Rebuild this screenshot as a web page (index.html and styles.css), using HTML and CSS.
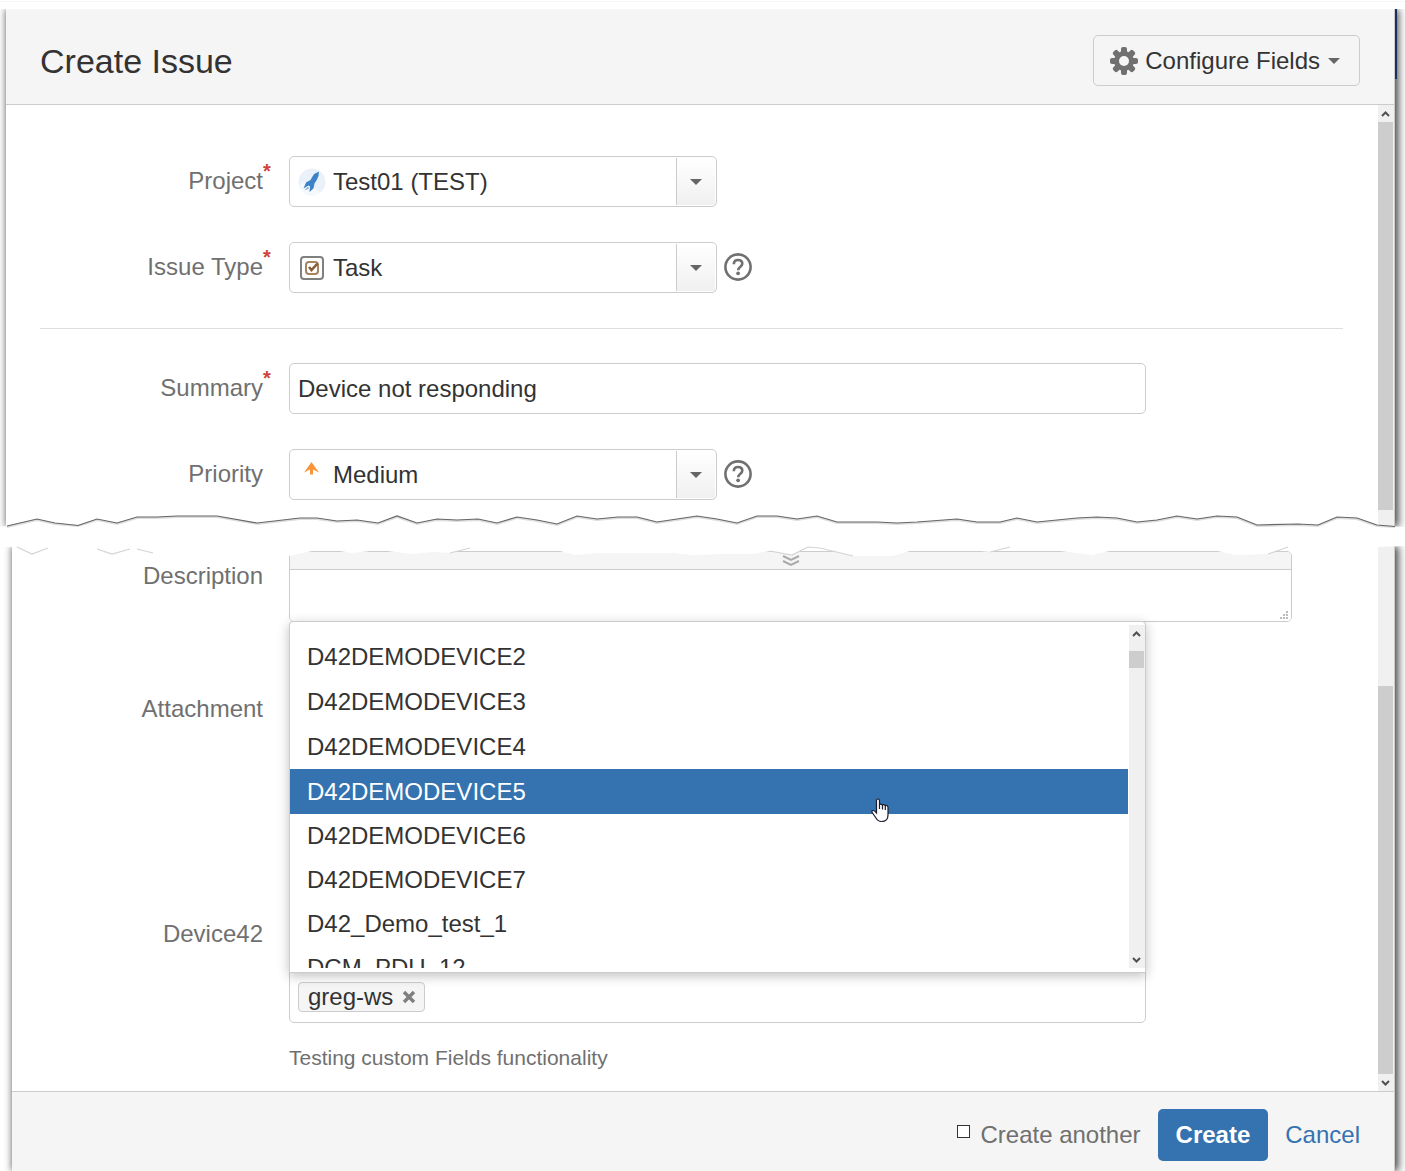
FILE: index.html
```html
<!DOCTYPE html>
<html lang="en">
<head>
<meta charset="utf-8">
<meta name="viewport" content="width=device-width, initial-scale=1">
<title>Create Issue</title>
<link rel="stylesheet" href="styles.css">
</head>
<body>
<form class="page">
  <section class="panel panel-top">
    <header class="dialog-header">
      <h1>Create Issue</h1>
      <button type="button" class="configure">
        <svg class="gear" viewBox="-14 -14 28 28" aria-hidden="true">
          <g fill="#707070">
            <rect x="-3" y="-14" width="6" height="28" rx="2"/>
            <rect x="-3" y="-14" width="6" height="28" rx="2" transform="rotate(45)"/>
            <rect x="-3" y="-14" width="6" height="28" rx="2" transform="rotate(90)"/>
            <rect x="-3" y="-14" width="6" height="28" rx="2" transform="rotate(135)"/>
            <circle r="10"/>
          </g>
          <circle r="5" fill="#f5f5f5"/>
        </svg>
        <span>Configure Fields</span>
        <svg class="caret" viewBox="0 0 12 6" aria-hidden="true"><path d="M0 0h12L6 6z"/></svg>
      </button>
    </header>
    <div class="scroll-area">
      <div class="fields fields-top">
        <div class="row">
          <label for="project">Project<span class="required">*</span></label>
          <div class="control">
            <div class="combo">
              <svg class="combo-icon" viewBox="0 0 28 28" aria-hidden="true">
                <circle cx="14" cy="14" r="13.500" fill="#eaf1f8"/>
                <path d="M1 18Q5 12 10 15T20 23Q24 25 22 25Q14 30 5 24Z" fill="#f6f9fc"/>
                <path d="M21 3.500Q16.500 5 14.500 8.500L12.500 12L8 14.500L5.500 20.500L10.500 17.500L12 18.500L11.500 24L15.500 20.500L16.500 15.500L19 11.500Q21 8 21 3.500Z" fill="#3b82c8"/>
                <path d="M10 18.500L6.500 22.500L11 20.500Z" fill="#7fb0e0"/>
              </svg>
              <select id="project"><option>Test01 (TEST)</option></select>
              <span class="combo-arrow"><svg class="caret" viewBox="0 0 12 6" aria-hidden="true"><path d="M0 0h12L6 6z"/></svg></span>
            </div>
          </div>
        </div>
        <div class="row">
          <label for="type">Issue Type<span class="required">*</span></label>
          <div class="control">
            <div class="combo">
              <svg class="combo-icon" viewBox="0 0 28 28" fill="none" aria-hidden="true">
                <rect x="3" y="3" width="22" height="22" rx="3" stroke="#808080" stroke-width="2"/>
                <rect x="8" y="8" width="12" height="12" rx="3" stroke="#a88462" stroke-width="2"/>
                <path d="M11 13L13.500 16L19.500 9.500" stroke="#8a5a33" stroke-width="2.500"/>
              </svg>
              <select id="type"><option>Task</option></select>
              <span class="combo-arrow"><svg class="caret" viewBox="0 0 12 6" aria-hidden="true"><path d="M0 0h12L6 6z"/></svg></span>
            </div>
            <button type="button" class="help" aria-label="Help">
              <svg viewBox="0 0 28 28" aria-hidden="true"><circle cx="14" cy="14" r="12.600"/><path d="M9.800 11.200C9.800 8.300 11.500 7 14 7C16.500 7 18.300 8.500 18.300 10.800C18.300 13.800 14.200 13.600 14.200 17.200"/><circle class="dot" cx="14.100" cy="20.300" r="1.900"/></svg>
            </button>
          </div>
        </div>
        <hr>
        <div class="row">
          <label for="summary">Summary<span class="required">*</span></label>
          <div class="control"><input id="summary" class="text" type="text" value="Device not responding"></div>
        </div>
        <div class="row">
          <label for="priority">Priority</label>
          <div class="control">
            <div class="combo">
              <svg class="combo-icon" viewBox="0 0 28 28" aria-hidden="true">
                <path d="M13.500 1L21 11.500L15 8.500V13.500H12V8.500L6 11.500Z" fill="#f7953a"/>
              </svg>
              <select id="priority"><option>Medium</option></select>
              <span class="combo-arrow"><svg class="caret" viewBox="0 0 12 6" aria-hidden="true"><path d="M0 0h12L6 6z"/></svg></span>
            </div>
            <button type="button" class="help" aria-label="Help">
              <svg viewBox="0 0 28 28" aria-hidden="true"><circle cx="14" cy="14" r="12.600"/><path d="M9.800 11.200C9.800 8.300 11.500 7 14 7C16.500 7 18.300 8.500 18.300 10.800C18.300 13.800 14.200 13.600 14.200 17.200"/><circle class="dot" cx="14.100" cy="20.300" r="1.900"/></svg>
            </button>
          </div>
        </div>
      </div>
      <div class="scrollbar">
        <svg class="chevron" viewBox="0 0 16 17" aria-hidden="true"><path d="M4 11L7.500 7.500L11 11"/></svg>
        <div class="thumb thumb-top"></div>
      </div>
    </div>
  </section>

  <div class="tear">
    <svg viewBox="0 510 1405 50" preserveAspectRatio="none" aria-hidden="true">
      <path fill="#fff" d="M0 527L7 526L37 519L55 523L78 525.500L97 519L117 523L137 517L157 517L177 516L217 516L257 523L300 518L317 518L337 521L357 520L378 523L397 516L417 523L437 519L457 520L478 519L497 523L517 517L537 520L557 524L577 516L597 519L618 517L637 517L657 522L677 519L697 516L717 519L737 523L757 516L777 516L797 519L817 516L837 522L877 522L897 523L917 522L957 519L977 522L1000 522L1017 518L1037 522L1077 518L1097 517L1117 518L1137 522L1157 520L1177 516L1197 519L1217 516L1237 517L1257 525L1298 524L1318 525L1337 517L1357 518L1377 525L1395 526.500L1405 527V546L1378 547L1288 547L1268 554L1235 555L1200 547L1127 547L1092 555L1060 551L1010 547L990 552L963 549L910 551L892 556L853 556L820 548L808 547L792 555L770 551L753 554L720 554L693 555L673 553L600 553L575 555L560 551L470 548L450 553L433 552L412 554L387 551L370 551L352 553L340 551L312 551L289 556L280 556H153L137 549L130 549L112 554L97 549L48 548L32 554L17 547H0Z"/>
      <path class="tear-shadow" d="M7 527L37 520L55 524L78 526L97 520L117 524L137 518L157 518L177 517L217 517L257 524L300 519L317 519L337 522L357 521L378 524L397 517L417 524L437 520L457 521L478 520L497 524L517 518L537 521L557 525L577 517L597 520L618 518L637 518L657 523L677 520L697 517L717 520L737 524L757 517L777 517L797 520L817 517L837 523L877 523L897 524L917 523L957 520L977 523L1000 523L1017 519L1037 523L1077 519L1097 518L1117 519L1137 523L1157 521L1177 517L1197 520L1217 517L1237 518L1257 526L1298 525L1318 526L1337 518L1357 519L1377 526L1395 527"/>
      <path class="tear-line" d="M7 526L37 519L55 523L78 525.500L97 519L117 523L137 517L157 517L177 516L217 516L257 523L300 518L317 518L337 521L357 520L378 523L397 516L417 523L437 519L457 520L478 519L497 523L517 517L537 520L557 524L577 516L597 519L618 517L637 517L657 522L677 519L697 516L717 519L737 523L757 516L777 516L797 519L817 516L837 522L877 522L897 523L917 522L957 519L977 522L1000 522L1017 518L1037 522L1077 518L1097 517L1117 518L1137 522L1157 520L1177 516L1197 519L1217 516L1237 517L1257 525L1298 524L1318 525L1337 517L1357 518L1377 525L1395 526.500"/>
      <path class="tear-faint" d="M17 547L32 554L48 548M97 549L112 554L130 549M137 549L153 553M450 553L470 548M770 551L792 555L808 547L820 548L853 556M990 552L1010 547M1268 554L1288 547"/>
    </svg>
  </div>

  <section class="panel panel-bottom">
    <div class="scroll-area">
      <div class="fields fields-bottom">
        <div class="row">
          <label for="description">Description</label>
          <div class="control">
            <div class="editor">
              <button type="button" class="editor-bar" aria-label="Expand toolbar">
                <svg viewBox="0 0 18 12" aria-hidden="true"><path d="M1 1L9 5L17 1M1 6L9 10L17 6"/></svg>
              </button>
              <textarea id="description"></textarea>
              <svg class="grip" viewBox="0 0 8 8" aria-hidden="true"><path d="M6 0h2v2h-2zM3 3h2v2h-2zM6 3h2v2h-2zM0 6h2v2h-2zM3 6h2v2h-2zM6 6h2v2h-2z"/></svg>
            </div>
          </div>
        </div>
        <div class="row row-attachment">
          <span class="label">Attachment</span>
        </div>
        <div class="row">
          <span class="label" id="device-label">Device42</span>
          <div class="control control-stack">
            <div class="picker">
              <span class="chip">greg-ws
                <button type="button" aria-label="Remove greg-ws"><svg viewBox="0 0 14 14" aria-hidden="true"><path d="M2 2L12 12M12 2L2 12"/></svg></button>
              </span>
              <div class="dropdown">
                <ul class="options" role="listbox" aria-labelledby="device-label">
                  <li role="option">D42DEMODEVICE2</li>
                  <li role="option">D42DEMODEVICE3</li>
                  <li role="option">D42DEMODEVICE4</li>
                  <li role="option" class="active" aria-selected="true">D42DEMODEVICE5</li>
                  <li role="option">D42DEMODEVICE6</li>
                  <li role="option">D42DEMODEVICE7</li>
                  <li role="option">D42_Demo_test_1</li>
                  <li role="option">DCM_PDU_12</li>
                </ul>
                <div class="scrollbar">
                  <svg class="chevron" viewBox="0 0 16 17" aria-hidden="true"><path d="M4 11L7.500 7.500L11 11"/></svg>
                  <div class="thumb thumb-list"></div>
                  <svg class="chevron chevron-end" viewBox="0 0 16 17" aria-hidden="true"><path d="M4 7L7.500 10.500L11 7"/></svg>
                </div>
                <svg class="pointer" viewBox="0 0 18 25" aria-hidden="true"><path d="M5.500 15V2.500Q5.500 1 7 1T8.500 2.500V6.500Q10 5.500 11.500 7Q13 6 14.300 7.500Q16.800 7 17 9.500V17Q17 23.500 10.500 23.500Q7 23.500 5 20L1.500 15Q0 12.500 2 12.500Q3.500 12.500 5.500 15Z"/><path d="M8.500 6.500V11M11.500 7V11.500M14.300 7.500V12"/></svg>
              </div>
            </div>
            <p class="hint">Testing custom Fields functionality</p>
          </div>
        </div>
      </div>
      <div class="scrollbar">
        <div class="thumb thumb-bottom"></div>
        <svg class="chevron chevron-end" viewBox="0 0 16 17" aria-hidden="true"><path d="M4 7L7.500 10.500L11 7"/></svg>
      </div>
    </div>
    <footer class="dialog-footer">
      <label class="another"><input type="checkbox"><span>Create another</span></label>
      <button type="submit" class="create">Create</button>
      <a href="#">Cancel</a>
    </footer>
  </section>
</form>
</body>
</html>
```

FILE: styles.css
```css
* {
  box-sizing: border-box;
}

body {
  margin: 0;
  background: #fff;
  color: #333;
  font: 24px/28px "Liberation Sans", Arial, sans-serif;
}

button, input, select, textarea {
  font: inherit;
  color: inherit;
  margin: 0;
}

.page {
  padding-top: 9px;
  overflow: hidden;
  background: linear-gradient(#f6f6f6, #f6f6f6) 0 1px / 100% 1px no-repeat #fff;
}

.panel {
  position: relative;
  margin-right: 10px;
  background: #fff;
  border-right: 1px solid #ccc;
  box-shadow: 4px 0 8px rgba(0, 0, 0, .6), -1px 0 7px rgba(0, 0, 0, .4);
  clip-path: inset(0 -10px 0 -10px);
}

.panel-top {
  margin-left: 6px;
}

/* Strip of the page behind the dialog */
.panel-top::after {
  content: "";
  position: absolute;
  top: 0;
  left: calc(100% + 1px);
  width: 2px;
  height: 70px;
  background: #14315c;
}

.panel-bottom {
  margin-left: 12px;
}

.dialog-header {
  display: flex;
  justify-content: space-between;
  align-items: center;
  height: 96px;
  padding: 8px 34px 0;
  background: #f5f5f5;
  border-bottom: 1px solid #ccc;
  border-radius: 3px 3px 0 0;
}

.dialog-header h1 {
  margin: 0;
  font-size: 34px;
  line-height: 40px;
  font-weight: 400;
}

.configure {
  display: flex;
  align-items: center;
  height: 51px;
  padding: 0 19px 0 16px;
  gap: 7px;
  background: #f5f5f5;
  border: 1px solid #ccc;
  border-radius: 5px;
}

.gear {
  width: 28px;
  height: 28px;
}

.caret {
  width: 12px;
  height: 6px;
  fill: #666;
}

.configure .caret {
  margin-left: 1px;
}

.scroll-area {
  display: flex;
}

.fields {
  flex: 1;
  min-width: 0;
}

.fields-top {
  padding: 51px 35px 27px 34px;
}

.fields-bottom {
  padding: 5px 35px 21px 28px;
}

.row {
  display: grid;
  grid-template-columns: 223px minmax(0, 1fr);
  column-gap: 26px;
}

.row + .row {
  margin-top: 35px;
}

.row > label,
.label {
  position: relative;
  padding-top: 11px;
  text-align: right;
  color: #707070;
}

.required {
  position: absolute;
  left: 100%;
  top: 5px;
  font-size: 20px;
  line-height: 20px;
  font-weight: 700;
  color: #d04437;
}

.control {
  display: flex;
  align-items: flex-start;
  gap: 7px;
}

.control-stack {
  display: block;
}

.combo {
  position: relative;
  width: 428px;
  max-width: 100%;
}

.combo select {
  display: block;
  width: 100%;
  height: 51px;
  padding: 0 50px 0 43px;
  appearance: none;
  background: #fff;
  border: 1px solid #ccc;
  border-radius: 5px;
}

.combo-icon {
  position: absolute;
  left: 9px;
  top: 12px;
  width: 28px;
  height: 28px;
}

.combo-arrow {
  position: absolute;
  top: 2px;
  right: 2px;
  bottom: 2px;
  width: 39px;
  display: flex;
  align-items: center;
  justify-content: center;
  background: linear-gradient(#fff, #f0f0f0);
  border-left: 1px solid #ccc;
  pointer-events: none;
}

.help {
  display: block;
  width: 28px;
  height: 28px;
  margin-top: 11px;
  padding: 0;
  border: 0;
  background: none;
}

.help svg {
  display: block;
  fill: none;
  stroke: #707070;
  stroke-width: 2.6;
}

.help .dot {
  fill: #707070;
  stroke: none;
}

hr {
  height: 1px;
  margin: 35px 0 34px;
  border: 0;
  background: #ddd;
}

.text {
  width: 857px;
  max-width: 100%;
  height: 51px;
  padding: 0 8px;
  border: 1px solid #ccc;
  border-radius: 5px;
}

.scrollbar {
  flex: none;
  display: flex;
  flex-direction: column;
  width: 16px;
  background: #f0f0f0;
}

.chevron {
  flex: none;
  width: 16px;
  height: 17px;
  fill: none;
  stroke: #505050;
  stroke-width: 2;
}

.chevron-end {
  margin-top: auto;
}

.thumb {
  width: 15px;
  background: #cdcdcd;
}

.thumb-top {
  height: 388px;
}

.thumb-bottom {
  height: 388px;
  margin-top: 140px;
}

.thumb-list {
  height: 17px;
  margin-top: 9px;
}

.tear {
  position: relative;
  z-index: 1;
  height: 19px;
}

.tear svg {
  position: absolute;
  left: 0;
  top: -17px;
  width: 100%;
  height: 50px;
  pointer-events: none;
}

.tear-line,
.tear-shadow,
.tear-faint {
  fill: none;
  stroke-width: 1.2;
}

.tear-shadow {
  stroke: #ddd;
  stroke-width: 2;
}

.tear-line {
  stroke: #666;
}

.tear-faint {
  stroke: #d4d4d4;
}

.editor {
  position: relative;
  width: 1003px;
  max-width: 100%;
  height: 71px;
  border: 1px solid #ccc;
  border-radius: 5px;
  overflow: hidden;
}

.editor-bar {
  display: flex;
  align-items: center;
  justify-content: center;
  width: 100%;
  height: 18px;
  padding: 0;
  background: #f5f5f5;
  border: 0;
  border-bottom: 1px solid #ccc;
}

.editor-bar svg {
  width: 18px;
  height: 12px;
  fill: none;
  stroke: #aaa;
  stroke-width: 2;
}

.editor textarea {
  display: block;
  width: 100%;
  height: 51px;
  padding: 8px;
  border: 0;
  resize: none;
}

.grip {
  position: absolute;
  right: 3px;
  bottom: 2px;
  width: 8px;
  height: 8px;
  fill: #bbb;
}

.row.row-attachment {
  margin-top: 62px;
  min-height: 190px;
}

.picker {
  position: relative;
  display: flex;
  align-items: flex-end;
  width: 857px;
  max-width: 100%;
  height: 114px;
  padding: 0 8px 10px;
  border: 1px solid #ccc;
  border-radius: 5px;
}

.chip {
  display: flex;
  align-items: center;
  gap: 9px;
  height: 30px;
  padding: 0 8px 0 9px;
  background: #f5f5f5;
  border: 1px solid #ccc;
  border-radius: 4px;
}

.chip button {
  width: 14px;
  height: 14px;
  padding: 0;
  border: 0;
  background: none;
}

.chip svg {
  display: block;
  fill: none;
  stroke: #808080;
  stroke-width: 3.4;
}

.dropdown {
  position: absolute;
  left: -1px;
  right: -1px;
  bottom: 49px;
  display: flex;
  gap: 1px;
  height: 352px;
  padding: 3px 0 4px;
  background: #fff;
  border: 1px solid #ccc;
  border-radius: 4px 4px 0 0;
  box-shadow: 0 3px 12px rgba(0, 0, 0, .25);
}

.options {
  flex: 1;
  margin: 0;
  padding: 9px 0 0;
  list-style: none;
  overflow: hidden;
}

.options li {
  display: flex;
  align-items: center;
  height: 45px;
  padding-left: 17px;
}

.options .active {
  background: #3572b0;
  color: #fff;
}

.options .active ~ li {
  height: 44px;
}

.pointer {
  position: absolute;
  right: 256px;
  top: 176px;
  width: 18px;
  height: 25px;
  fill: #fff;
  stroke: #1a1a2e;
  stroke-width: 1.2;
}

.hint {
  margin: 23px 0 0;
  font-size: 21px;
  line-height: 24px;
  color: #707070;
}

.dialog-footer {
  display: flex;
  justify-content: flex-end;
  align-items: center;
  gap: 17px;
  padding: 17px 34px 10px;
  background: #f5f5f5;
  border-top: 1px solid #ccc;
}

.another {
  display: flex;
  align-items: center;
  gap: 10px;
  color: #707070;
}

.another input {
  width: 13px;
  height: 13px;
  margin-bottom: 7px;
  appearance: none;
  background: #fff;
  border: 1px solid #333;
}

.create {
  height: 52px;
  padding: 0 18px;
  background: #3572b0;
  border: 0;
  border-radius: 5px;
  color: #fff;
  font-weight: 700;
}

.dialog-footer a {
  color: #3572b0;
  text-decoration: none;
}
```
